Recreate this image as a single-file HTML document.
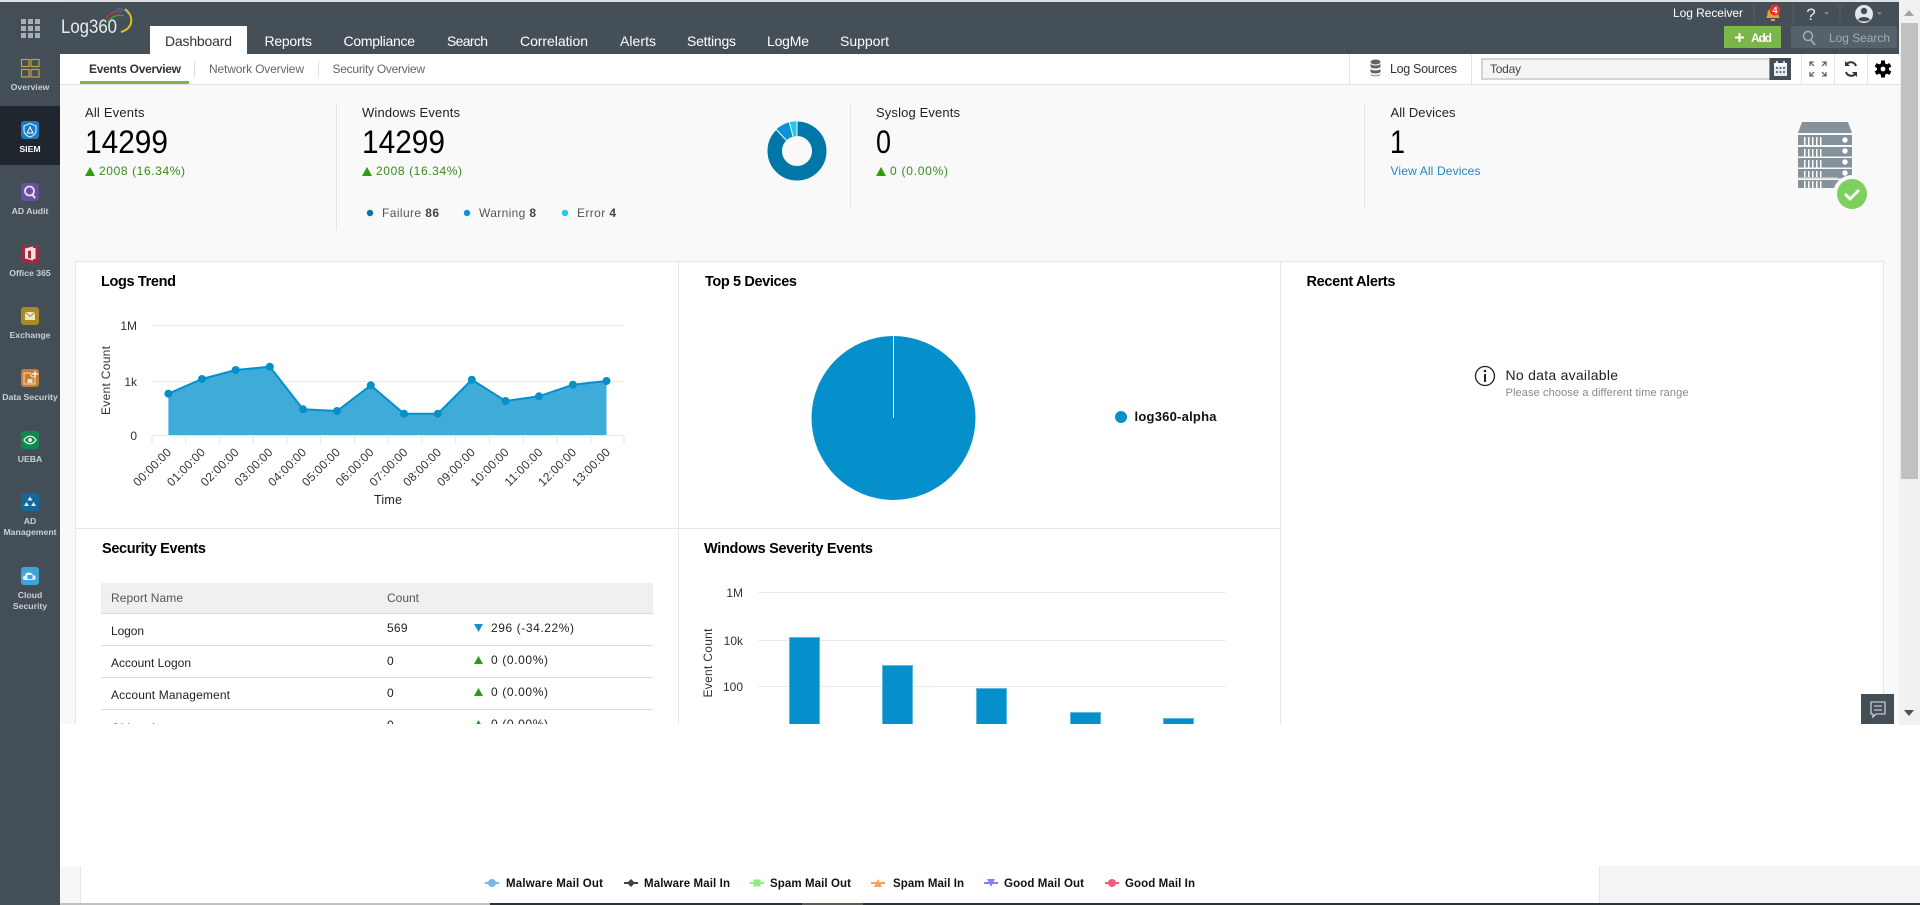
<!DOCTYPE html>
<html lang="en"><head><meta charset="utf-8"><title>Log360</title>
<style>
html,body{margin:0;padding:0;width:1920px;height:905px;overflow:hidden;background:#fff}
svg{position:absolute;left:0;top:0;display:block}
text{font-family:"Liberation Sans",Arial,sans-serif;white-space:pre}
.tab{font-size:14px;fill:#fff}
.sb{font-size:8.7px;fill:#c9d0d5;text-anchor:middle;font-weight:bold}
.lab{font-size:13px;fill:#222}
.num{font-size:32px;fill:#000}
.up{font-size:12px;fill:#3a8a1c}
.ttl{font-size:14.5px;font-weight:bold;fill:#000}
.ax{font-size:12px;fill:#333}
.ar{font-size:12px;fill:#333;text-anchor:end}
.td{font-size:12px;fill:#222}
.lg{font-size:11.5px;font-weight:bold;fill:#111}
</style></head><body>
<svg width="1920" height="905" viewBox="0 0 1920 905" xmlns="http://www.w3.org/2000/svg">
<defs><clipPath id="c"><rect x="60" y="85" width="1840" height="639"/></clipPath></defs>
<rect width="1920" height="905" fill="#fff"/>
<!-- header -->
<rect x="0" y="0" width="1920" height="2" fill="#dfe1e2"/>
<rect x="0" y="2" width="1900" height="52" fill="#444f57"/>
<rect x="0" y="2" width="60" height="901" fill="#434e56"/>
<!-- scrollbar -->
<rect x="1899" y="0" width="21" height="725" fill="#f1f1f1"/>
<rect x="1901" y="23" width="17" height="456" fill="#c1c1c1"/>
<path d="M1909 10l5 6h-10z" fill="#a3a3a3"/><path d="M1904 710h10l-5 6z" fill="#505050"/>
<!-- grid icon -->
<g fill="#a9afb4"><rect x="21" y="19" width="5" height="5"/><rect x="28" y="19" width="5" height="5"/><rect x="35" y="19" width="5" height="5"/><rect x="21" y="26" width="5" height="5"/><rect x="28" y="26" width="5" height="5"/><rect x="35" y="26" width="5" height="5"/><rect x="21" y="33" width="5" height="5"/><rect x="28" y="33" width="5" height="5"/><rect x="35" y="33" width="5" height="5"/></g>
<!-- logo -->
<text x="61" y="33" font-size="19" fill="#e8ecee" textLength="56" lengthAdjust="spacingAndGlyphs">Log360</text>
<g fill="none" stroke-width="1.6"><path d="M106 19C109 13 116 10 122 12" stroke="#b83a3a"/><path d="M108 22C112 16 118 14 124 16" stroke="#3f9c4a"/><path d="M116 9C120 8 125 10 128 14" stroke="#2c6db5"/><path d="M125 9C134 16 134 28 121 32" stroke="#e3c01f" stroke-width="2"/></g>
<!-- tabs -->
<rect x="150" y="26" width="97" height="28" fill="#fff"/>
<text x="165" y="46" class="tab" style="fill:#333" textLength="67">Dashboard</text>
<text x="264.5" y="46" class="tab" textLength="47.5">Reports</text>
<text x="343.5" y="46" class="tab" textLength="71.5">Compliance</text>
<text x="447" y="46" class="tab" textLength="41">Search</text>
<text x="520" y="46" class="tab" textLength="68">Correlation</text>
<text x="620" y="46" class="tab" textLength="36">Alerts</text>
<text x="687" y="46" class="tab" textLength="49">Settings</text>
<text x="767" y="46" class="tab" textLength="42">LogMe</text>
<text x="840" y="46" class="tab" textLength="49">Support</text>
<!-- top right -->
<text x="1673" y="17" font-size="12" fill="#fff" textLength="70">Log Receiver</text>
<rect x="1753.5" y="5" width="1" height="17" fill="#566169"/><rect x="1792.5" y="5" width="1" height="17" fill="#566169"/><rect x="1839.5" y="5" width="1" height="17" fill="#566169"/>
<path d="M1766 18c2-2 1-4 2-7 1-2 3-3 5-3s4 1 5 3c1 3 0 5 2 7z" fill="#e8a03a"/><rect x="1771" y="19" width="4" height="2" fill="#e8a03a"/>
<circle cx="1775" cy="10" r="5.5" fill="#e5322d"/><text x="1775" y="13.5" font-size="9" font-weight="bold" fill="#fff" text-anchor="middle">4</text>
<text x="1811" y="20" font-size="17" fill="#e8ecee" text-anchor="middle">?</text><path d="M1824 12h5l-2.5 3z" fill="#7b858c"/>
<circle cx="1864" cy="14" r="9" fill="#e3e6e8"/><circle cx="1864" cy="11" r="3.2" fill="#444f57"/><path d="M1858 20c1-4 11-4 12 0-3 2-9 2-12 0z" fill="#444f57"/><path d="M1877 12h5l-2.5 3z" fill="#7b858c"/>
<rect x="1724" y="26" width="57" height="22" fill="#7ab648"/>
<path d="M1739.5 33v9M1735 37.5h9" stroke="#fff" stroke-width="2"/>
<text x="1751" y="42" font-size="12" font-weight="bold" fill="#fff" textLength="21">Add</text>
<rect x="1791" y="26" width="106" height="22" fill="#56616a"/>
<circle cx="1808" cy="36" r="4.5" fill="none" stroke="#a4acb2" stroke-width="1.5"/><path d="M1811 40l4 5" stroke="#a4acb2" stroke-width="1.8"/>
<text x="1829" y="42" font-size="12" fill="#a4acb2" textLength="61">Log Search</text>
<!-- sidebar -->
<rect x="0" y="106" width="60" height="59" fill="#1f262d"/>
<g fill="none" stroke="#c9a23f" stroke-width="1.2"><rect x="21.5" y="59.5" width="7.5" height="7"/><rect x="31" y="59.5" width="8" height="7"/><rect x="21.5" y="69.5" width="7.5" height="7.5"/><rect x="31" y="69.5" width="8" height="7.5"/></g>
<text x="30" y="90" class="sb">Overview</text>
<rect x="21" y="121" width="18" height="18" rx="3" fill="#1d7bc0"/><path d="M30 123.5l6 2.5v4.500c0 3.500-3 5.500-6 6.500-3-1-6-3-6-6.500V126z" fill="none" stroke="#cfe6f5" stroke-width="1.2"/><path d="M30 127l3 6h-6z" fill="none" stroke="#fff" stroke-width=".9"/>
<text x="30" y="152" class="sb" style="fill:#fff">SIEM</text>
<rect x="21" y="183" width="18" height="18" rx="3" fill="#6b4f9e"/><circle cx="29.5" cy="191" r="4.5" fill="none" stroke="#e6e0f2" stroke-width="1.8"/><path d="M32 194l3 4" stroke="#e6e0f2" stroke-width="2"/>
<text x="30" y="214" class="sb">AD Audit</text>
<rect x="21" y="245" width="18" height="18" rx="3" fill="#9e2b3f"/><path d="M25 248.5l8-2v14l-8-2zM28 251v7l3 .5v-8zM33 248h2.5v11H33z" fill="#f2dfe2" fill-rule="evenodd"/>
<text x="30" y="276" class="sb">Office 365</text>
<rect x="21" y="307" width="18" height="18" rx="3" fill="#a88a27"/><rect x="25" y="312" width="10" height="8" fill="#efe6c8"/><path d="M25 312l5 4.5 5-4.5" fill="none" stroke="#a88a27"/>
<text x="30" y="338" class="sb">Exchange</text>
<rect x="21" y="369" width="18" height="18" rx="3" fill="#c57e38"/><path d="M24 373v11h11v-7h-3l-2-4z" fill="none" stroke="#f5dcc0"/><rect x="27.5" y="379" width="5" height="4" fill="#f5dcc0"/><path d="M35 371v6M32 374h6" stroke="#fff" stroke-width="1.2"/>
<text x="30" y="400" class="sb">Data Security</text>
<rect x="21" y="431" width="18" height="18" rx="3" fill="#12874f"/><path d="M24 440c3-5 9-5 12 0-3 5-9 5-12 0z" fill="none" stroke="#d8f2e4" stroke-width="1.3"/><circle cx="30" cy="440" r="2" fill="#d8f2e4"/>
<text x="30" y="462" class="sb">UEBA</text>
<rect x="21" y="493" width="18" height="18" rx="3" fill="#15679b"/><path d="M30 496.5l2.5 4h-5zM26.5 502l2.5 4h-5zM33.5 502l2.5 4h-5z" fill="#e3eff7"/>
<text x="30" y="524" class="sb">AD</text><text x="30" y="535" class="sb">Management</text>
<rect x="21" y="567" width="18" height="18" rx="3" fill="#3fa5d9"/><path d="M25 580c-3 0-3-4 0-4 0-4 6-5 8-1 3 0 4 5 0 5z" fill="#e6f4fb"/><rect x="27.5" y="575" width="5" height="4" fill="#3fa5d9"/>
<text x="30" y="598" class="sb">Cloud</text><text x="30" y="609" class="sb">Security</text>
<!-- subnav -->
<rect x="60" y="54" width="1840" height="30" fill="#fff"/>
<rect x="60" y="84" width="1840" height="1" fill="#dfe3e6"/>
<rect x="80" y="81" width="109" height="3" fill="#7ab648"/>
<text x="89" y="73" font-size="12" font-weight="bold" fill="#333" textLength="92">Events Overview</text>
<rect x="194" y="61" width="1" height="16" fill="#dcdcdc"/><rect x="318" y="61" width="1" height="16" fill="#dcdcdc"/>
<text x="209" y="73" font-size="12" fill="#666" textLength="95">Network Overview</text>
<text x="332.5" y="73" font-size="12" fill="#666" textLength="92.5">Security Overview</text>
<g fill="#e2e5e7"><rect x="1349" y="54" width="1" height="30"/><rect x="1471" y="54" width="1" height="30"/><rect x="1801" y="54" width="1" height="30"/><rect x="1834" y="54" width="1" height="30"/><rect x="1867" y="54" width="1" height="30"/></g>
<g fill="#5a646b"><ellipse cx="1375.5" cy="62" rx="5" ry="2.5"/><path d="M1370.5 64c2 2 8 2 10 0v3c-2 2-8 2-10 0zM1370.5 69c2 2 8 2 10 0v3c-2 2-8 2-10 0zM1370.5 74c2 2 8 2 10 0v0c0 3-10 3-10 0z"/></g>
<text x="1390" y="73" font-size="12.5" fill="#333" textLength="67">Log Sources</text>
<rect x="1482" y="59" width="288" height="20" fill="#f5f5f5" stroke="#d2d5d7" stroke-width="2"/>
<text x="1490" y="73" font-size="12" fill="#444" textLength="31">Today</text>
<rect x="1769.5" y="58" width="21.5" height="22" fill="#434e56"/>
<rect x="1774" y="63" width="13" height="13" fill="#e9ecee"/><rect x="1774" y="63" width="13" height="2.5" fill="#fff"/><path d="M1777 61v4M1784 61v4" stroke="#fff" stroke-width="1.5"/>
<g fill="#6a747b"><rect x="1776" y="67" width="2" height="2"/><rect x="1779.5" y="67" width="2" height="2"/><rect x="1783" y="67" width="2" height="2"/><rect x="1776" y="71" width="2" height="2"/><rect x="1779.5" y="71" width="2" height="2"/><rect x="1783" y="71" width="2" height="2"/></g>
<g fill="none" stroke="#444f57" stroke-width="1.1"><path d="M1810 66v-4h4M1810 62l4 4M1826 66v-4h-4M1826 62l-4 4M1810 72v4h4M1810 76l4-4M1826 72v4h-4M1826 76l-4-4"/></g>
<path d="M1856 66a5.5 5.5 0 0 0-10-1M1846 72a5.5 5.5 0 0 0 10 1" fill="none" stroke="#333" stroke-width="2"/><path d="M1845 61v5h5zM1857 77v-5h-5z" fill="#333"/>
<g transform="translate(1883 69)" fill="#000"><circle r="4.2" fill="none" stroke="#000" stroke-width="3.6"/><rect x="-2" y="-8.5" width="4" height="3.5"/><rect x="-2" y="5" width="4" height="3.5"/><rect x="-2" y="-8.5" width="4" height="3.5" transform="rotate(60)"/><rect x="-2" y="5" width="4" height="3.5" transform="rotate(60)"/><rect x="-2" y="-8.5" width="4" height="3.5" transform="rotate(120)"/><rect x="-2" y="5" width="4" height="3.5" transform="rotate(120)"/></g>
<g clip-path="url(#c)">
<rect x="60" y="85" width="1839" height="640" fill="#f9f9f9"/>
<!-- stats -->
<rect x="336" y="104" width="1" height="127" fill="#e6e6e6"/><rect x="850" y="104" width="1" height="105" fill="#e6e6e6"/><rect x="1364" y="104" width="1" height="105" fill="#e6e6e6"/>
<text x="85" y="117" class="lab" textLength="59.5">All Events</text>
<text x="85" y="153" class="num" textLength="83" lengthAdjust="spacingAndGlyphs">14299</text>
<path d="M85 176l5-9 5 9z" fill="#2e9c0f"/><text x="99" y="175" class="up" textLength="86">2008 (16.34%)</text>
<text x="362" y="117" class="lab" textLength="98">Windows Events</text>
<text x="362" y="153" class="num" textLength="83" lengthAdjust="spacingAndGlyphs">14299</text>
<path d="M362 176l5-9 5 9z" fill="#2e9c0f"/><text x="376" y="175" class="up" textLength="86">2008 (16.34%)</text>
<circle cx="370" cy="213" r="3.2" fill="#0077a8"/><text x="382" y="217" font-size="12" fill="#555" textLength="57">Failure <tspan font-weight="bold" fill="#444">86</tspan></text>
<circle cx="467" cy="213" r="3.2" fill="#0a94d6"/><text x="479" y="217" font-size="12" fill="#555" textLength="57">Warning <tspan font-weight="bold" fill="#444">8</tspan></text>
<circle cx="565" cy="213" r="3.2" fill="#1ecbe8"/><text x="577" y="217" font-size="12" fill="#555" textLength="39">Error <tspan font-weight="bold" fill="#444">4</tspan></text>
<!-- donut -->
<g transform="translate(797 151)">
<circle r="22.25" fill="none" stroke="#0077a8" stroke-width="14.5"/>
<path d="M-20.8-21.500A29.800 29.800 0 0 1-7.700-28.800L-3.900-14.500A15 15 0 0 0-10.600-10.600z" fill="#0a94d6"/>
<path d="M-7.700-28.800A29.800 29.800 0 0 1 0-29.800L0-15A15 15 0 0 0-3.900-14.500z" fill="#1ecbe8"/>
<path d="M0-30V-15M-7.700-28.800L-3.900-14.500M-20.800-21.500L-10.600-10.600" stroke="#f9f9f9" stroke-width="1"/>
</g>
<text x="876" y="117" class="lab" textLength="84">Syslog Events</text>
<text x="876" y="153" class="num" textLength="15" lengthAdjust="spacingAndGlyphs">0</text>
<path d="M876 176l5-9 5 9z" fill="#2e9c0f"/><text x="890" y="175" class="up" textLength="58">0 (0.00%)</text>
<text x="1390.5" y="117" class="lab" textLength="65">All Devices</text>
<text x="1390" y="153" class="num" textLength="15" lengthAdjust="spacingAndGlyphs">1</text>
<text x="1390.5" y="175" font-size="12" fill="#1f86c0" textLength="90">View All Devices</text>
<!-- server -->
<g fill="#85929b"><path d="M1802 122h46l4 11h-54z"/><rect x="1798" y="135" width="54" height="10"/><rect x="1798" y="147" width="54" height="9.5"/><rect x="1798" y="158" width="54" height="9.5"/><rect x="1798" y="169" width="54" height="9.5"/><rect x="1798" y="180" width="54" height="8"/></g>
<g fill="#fff"><rect x="1804" y="137" width="1.5" height="8"/><rect x="1808" y="137" width="1.5" height="8"/><rect x="1812" y="137" width="1.5" height="8"/><rect x="1816" y="137" width="1.5" height="8"/><rect x="1820" y="137" width="1.5" height="8"/>
<rect x="1804" y="149" width="1.5" height="8"/><rect x="1808" y="149" width="1.5" height="8"/><rect x="1812" y="149" width="1.5" height="8"/><rect x="1816" y="149" width="1.5" height="8"/><rect x="1820" y="149" width="1.5" height="8"/>
<rect x="1804" y="160" width="1.5" height="8"/><rect x="1808" y="160" width="1.5" height="8"/><rect x="1812" y="160" width="1.5" height="8"/><rect x="1816" y="160" width="1.5" height="8"/><rect x="1820" y="160" width="1.5" height="8"/>
<rect x="1804" y="171" width="1.5" height="8"/><rect x="1808" y="171" width="1.5" height="8"/><rect x="1812" y="171" width="1.5" height="8"/><rect x="1816" y="171" width="1.5" height="8"/><rect x="1820" y="171" width="1.5" height="8"/>
<rect x="1804" y="181" width="1.5" height="7"/><rect x="1808" y="181" width="1.5" height="7"/><rect x="1812" y="181" width="1.5" height="7"/><rect x="1816" y="181" width="1.5" height="7"/><rect x="1820" y="181" width="1.5" height="7"/>
<circle cx="1845" cy="140" r="2.7"/><circle cx="1845" cy="151" r="2.7"/><circle cx="1845" cy="162" r="2.7"/><circle cx="1845" cy="173" r="2.7"/></g>
<rect x="1798" y="177" width="40" height="1.5" fill="#b8bfc4"/>
<circle cx="1852" cy="194" r="19" fill="#f9f9f9"/><circle cx="1852" cy="194" r="15" fill="#7dcf5e"/><path d="M1845 194l5 5 9-9" fill="none" stroke="#fff" stroke-width="2.8"/>
<!-- cards -->
<rect x="75.5" y="261.5" width="1808" height="470" fill="#fff" stroke="#e6e6e6"/>
<rect x="678" y="262" width="1" height="470" fill="#e6e6e6"/><rect x="1280" y="262" width="1" height="470" fill="#e6e6e6"/>
<rect x="76" y="528" width="1204" height="1" fill="#e6e6e6"/>
<text x="101" y="286" class="ttl" textLength="75">Logs Trend</text>
<text x="705" y="286" class="ttl" textLength="92">Top 5 Devices</text>
<text x="1306.5" y="286" class="ttl" textLength="89">Recent Alerts</text>
<text x="102" y="553" class="ttl" textLength="104">Security Events</text>
<text x="704" y="553" class="ttl" textLength="169">Windows Severity Events</text>
<!-- logs trend -->
<rect x="152" y="325" width="472" height="1" fill="#ebebeb"/><rect x="152" y="381" width="472" height="1" fill="#ebebeb"/><rect x="152" y="435" width="472" height="1" fill="#e6e6e6"/>
<path d="M152 436v8M185.7 436v8M219.5 436v8M253.2 436v8M287 436v8M320.7 436v8M354.5 436v8M388.2 436v8M422 436v8M455.7 436v8M489.5 436v8M523.2 436v8M557 436v8M590.7 436v8M624 436v8" stroke="#e6e6e6" fill="none"/>
<text x="137" y="330" class="ar">1M</text><text x="137" y="386" class="ar">1k</text><text x="137" y="440" class="ar">0</text>
<text transform="translate(110 380.5) rotate(-90)" class="ax" text-anchor="middle" textLength="69">Event Count</text>
<path d="M168.4 393.7L202 379 235.7 370 269.8 366.7 303 409.3 337 411 370.8 385.3 404 413.7 437.8 413.7 471.8 379.7 505.5 401 539 396.3 572.9 384.7 606.5 381V435H168.4z" fill="#3fabd8"/>
<path d="M168.4 393.7L202 379 235.7 370 269.8 366.7 303 409.3 337 411 370.8 385.3 404 413.7 437.8 413.7 471.8 379.7 505.5 401 539 396.3 572.9 384.7 606.5 381" fill="none" stroke="#0590cc" stroke-width="2"/>
<g fill="#0590cc"><circle cx="168.4" cy="393.7" r="4"/><circle cx="202" cy="379" r="4"/><circle cx="235.7" cy="370" r="4"/><circle cx="269.8" cy="366.7" r="4"/><circle cx="303" cy="409.3" r="4"/><circle cx="337" cy="411" r="4"/><circle cx="370.8" cy="385.3" r="4"/><circle cx="404" cy="413.7" r="4"/><circle cx="437.8" cy="413.7" r="4"/><circle cx="471.8" cy="379.7" r="4"/><circle cx="505.5" cy="401" r="4"/><circle cx="539" cy="396.3" r="4"/><circle cx="572.9" cy="384.7" r="4"/><circle cx="606.5" cy="381" r="4"/></g>
<g class="rot" font-size="12" fill="#333" text-anchor="end">
<text transform="translate(172 453) rotate(-45)" textLength="48">00:00:00</text>
<text transform="translate(205.8 453) rotate(-45)" textLength="48">01:00:00</text>
<text transform="translate(239.5 453) rotate(-45)" textLength="48">02:00:00</text>
<text transform="translate(273.3 453) rotate(-45)" textLength="48">03:00:00</text>
<text transform="translate(307 453) rotate(-45)" textLength="48">04:00:00</text>
<text transform="translate(340.8 453) rotate(-45)" textLength="48">05:00:00</text>
<text transform="translate(374.5 453) rotate(-45)" textLength="48">06:00:00</text>
<text transform="translate(408.3 453) rotate(-45)" textLength="48">07:00:00</text>
<text transform="translate(442 453) rotate(-45)" textLength="48">08:00:00</text>
<text transform="translate(475.8 453) rotate(-45)" textLength="48">09:00:00</text>
<text transform="translate(509.5 453) rotate(-45)" textLength="48">10:00:00</text>
<text transform="translate(543.3 453) rotate(-45)" textLength="48">11:00:00</text>
<text transform="translate(577 453) rotate(-45)" textLength="48">12:00:00</text>
<text transform="translate(610.8 453) rotate(-45)" textLength="48">13:00:00</text>
</g>
<text x="388" y="504" font-size="12.5" fill="#222" text-anchor="middle" textLength="28">Time</text>
<!-- pie -->
<circle cx="893.5" cy="418" r="82" fill="#0590cc"/><rect x="893" y="336" width="1" height="82" fill="#fff"/>
<circle cx="1121" cy="417" r="6" fill="#0590cc"/>
<text x="1134.5" y="421" font-size="13" font-weight="bold" fill="#111" textLength="82">log360-alpha</text>
<!-- recent alerts -->
<circle cx="1485" cy="376" r="9.5" fill="none" stroke="#222" stroke-width="1.3"/><circle cx="1485" cy="371" r="1.3" fill="#222"/><rect x="1484" y="374" width="2" height="8" fill="#222"/>
<text x="1505.5" y="380" font-size="14" fill="#222" textLength="112.5">No data available</text>
<text x="1505.5" y="396" font-size="11" fill="#888" textLength="183">Please choose a different time range</text>
<!-- table -->
<rect x="101" y="583" width="552" height="30" fill="#f0f0f0"/>
<rect x="101" y="613" width="552" height="1" fill="#ddd"/><rect x="101" y="645" width="552" height="1" fill="#ddd"/><rect x="101" y="677" width="552" height="1" fill="#ddd"/><rect x="101" y="709" width="552" height="1" fill="#ddd"/>
<text x="111" y="602" class="td" style="fill:#555" textLength="72">Report Name</text><text x="387" y="602" class="td" style="fill:#555" textLength="32">Count</text>
<text x="111" y="635" class="td" textLength="33">Logon</text><text x="387" y="632" class="td" textLength="20.5">569</text>
<path d="M474 624h9l-4.5 8z" fill="#1c8fd0"/><text x="491" y="632" class="td" textLength="83">296 (-34.22%)</text>
<text x="111" y="667" class="td" textLength="80">Account Logon</text><text x="387" y="665" class="td">0</text>
<path d="M474 664l4.5-8 4.5 8z" fill="#2e9c0f"/><text x="491" y="664" class="td" textLength="57">0 (0.00%)</text>
<text x="111" y="699" class="td" textLength="119">Account Management</text><text x="387" y="697" class="td">0</text>
<path d="M474 696l4.500-8 4.500 8z" fill="#2e9c0f"/><text x="491" y="696" class="td" textLength="57">0 (0.00%)</text>
<text x="111" y="732" class="td" textLength="78">Object Access</text><text x="387" y="729" class="td">0</text>
<path d="M474 728l4.5-8 4.5 8z" fill="#2e9c0f"/><text x="491" y="728" class="td" textLength="57">0 (0.00%)</text>
<!-- severity -->
<rect x="758" y="592" width="468" height="1" fill="#ebebeb"/><rect x="758" y="640" width="468" height="1" fill="#ebebeb"/><rect x="758" y="686" width="468" height="1" fill="#ebebeb"/>
<text x="743" y="597" class="ar">1M</text><text x="743" y="645" class="ar">10k</text><text x="743" y="691" class="ar">100</text>
<text transform="translate(712 663) rotate(-90)" class="ax" text-anchor="middle" textLength="69">Event Count</text>
<g fill="#0590cc" stroke="#5fb8de"><rect x="789.5" y="637.5" width="30" height="100"/><rect x="882.5" y="665.5" width="30" height="70"/><rect x="976.5" y="688.5" width="30" height="50"/><rect x="1070.5" y="712.5" width="30" height="30"/><rect x="1163.5" y="718.5" width="30" height="30"/></g>
</g>
<!-- chat -->
<rect x="1861" y="694" width="33" height="30" fill="#434e56"/>
<path d="M1871 702h14v12h-9l-3 3v-3h-2z" fill="none" stroke="#dfe4e7" stroke-width="1.1"/><path d="M1874 706h8M1874 710h8" stroke="#dfe4e7"/>
<!-- bottom panel -->
<rect x="60" y="866" width="20" height="37" fill="#f7f7f7"/><rect x="80" y="866" width="1" height="37" fill="#e6e6e6"/>
<rect x="1599" y="866" width="321" height="37" fill="#f4f4f4"/><rect x="1599" y="866" width="1" height="37" fill="#e6e6e6"/>
<g><path d="M485 883h14" stroke="#7cb5ec" stroke-width="2"/><circle cx="492" cy="883" r="4" fill="#7cb5ec"/><text x="506" y="887" class="lg" textLength="97">Malware Mail Out</text>
<path d="M624 883h14" stroke="#434348" stroke-width="2"/><path d="M631 879l4 4-4 4-4-4z" fill="#434348"/><text x="644" y="887" class="lg" textLength="86">Malware Mail In</text>
<path d="M750 883h14" stroke="#90ed7d" stroke-width="2"/><rect x="753.500" y="879.500" width="7" height="7" fill="#90ed7d"/><text x="770" y="887" class="lg" textLength="81">Spam Mail Out</text>
<path d="M871 883h14" stroke="#f7a35c" stroke-width="2"/><path d="M878 879l4 8h-8z" fill="#f7a35c"/><text x="893" y="887" class="lg" textLength="71">Spam Mail In</text>
<path d="M984 883h14" stroke="#8085e9" stroke-width="2"/><path d="M987 879h8l-4 8z" fill="#8085e9"/><text x="1004" y="887" class="lg" textLength="80">Good Mail Out</text>
<path d="M1105 883h14" stroke="#f15c80" stroke-width="2"/><circle cx="1112" cy="883" r="4" fill="#f15c80"/><text x="1125" y="887" class="lg" textLength="70">Good Mail In</text></g>
<!-- bottom strip -->
<rect x="0" y="903" width="60" height="2" fill="#434e56"/>
<rect x="60" y="903" width="430" height="2" fill="#c0c0c0"/><rect x="490" y="903" width="1430" height="2" fill="#2a3336"/><rect x="802" y="903" width="61" height="2" fill="#5c5c58"/>
</svg>
</body></html>
